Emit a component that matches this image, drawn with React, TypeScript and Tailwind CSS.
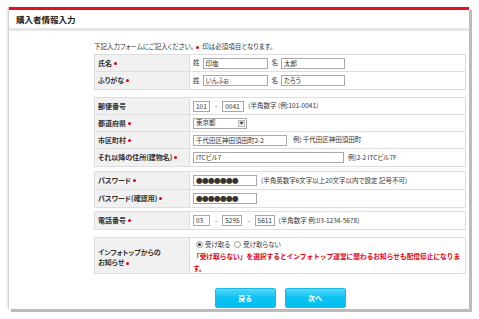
import React from 'react';

const Req = () => <span className="inline-block w-[3px] h-[3px] rounded-full bg-[#e60012] ml-[2px] align-middle" />;

function Input({ w, value, dots }: { w: string; value?: string; dots?: boolean }) {
  return (
    <div
      className={`${w} h-[11px] border border-[#a8a8a8] bg-white flex items-center pl-[2px] text-[6.5px] leading-none text-[#333] ${
        dots ? 'font-bold tracking-[-0.5px]' : ''
      }`}
    >
      {value}
    </div>
  );
}

function Row({ label, children, last, h = 'h-[17px]' }: { label: React.ReactNode; children?: React.ReactNode; last?: boolean; h?: string }) {
  return (
    <div className={`flex ${h} ${last ? '' : 'border-b border-[#dedede]'}`}>
      <div className="w-[95px] shrink-0 bg-[#f1f1f1] border-r border-[#dedede] flex items-center pl-[3px] font-bold text-[7px] text-[#333]">
        {label}
      </div>
      <div className="flex-1 flex items-center pl-[3px] gap-[3px] text-[6.5px] text-[#333]">{children}</div>
    </div>
  );
}

function Box({ children, className = '' }: { children: React.ReactNode; className?: string }) {
  return <div className={`border border-[#dedede] ${className}`}>{children}</div>;
}

function Radio({ checked, label }: { checked?: boolean; label: string }) {
  return (
    <span className="flex items-center gap-[2px]">
      <span className="w-[7px] h-[7px] rounded-full border border-[#999] bg-white flex items-center justify-center">
        {checked && <span className="w-[3px] h-[3px] rounded-full bg-[#333]" />}
      </span>
      {label}
    </span>
  );
}

export default function App() {
  return (
    <div className="w-[479px] h-[319px] bg-white overflow-hidden pt-[7px] pl-[8px] font-['Noto_Sans_CJK_JP','Noto_Sans',sans-serif] [font-feature-settings:'palt']">
      <div className="w-[461px] h-[302px] bg-white border-l border-[#d2d2d2] shadow-[3px_3px_0_#bcbcbc,-1px_0_2px_#e6e6e6]">
        {/* header */}
        <div className="h-[3px] bg-[#e8101e]" />
        <div className="h-[18px] flex items-center pl-[7px] text-[8.5px] font-bold text-[#222]">購入者情報入力</div>
        <div className="h-[3px] bg-[#e6e6e6]" />

        <div className="ml-[85px] w-[372px] pt-[11px]">
          <p className="text-[6.5px] text-[#333] leading-[8px] mb-[4px]">
            下記入力フォームにご記入ください。
            <span className="inline-block w-[3px] h-[3px] rounded-full bg-[#e60012] mx-[2px] align-middle" /> 印は必須項目となります。
          </p>

          <Box className="mb-[7px]">
            <Row label={<>氏名<Req /></>}>
              <span>姓</span>
              <Input w="w-[65px]" value="印塩" />
              <span className="ml-[1px]">名</span>
              <Input w="w-[64px]" value="太郎" />
            </Row>
            <Row label={<>ふりがな<Req /></>} last>
              <span>姓</span>
              <Input w="w-[65px]" value="いんふぉ" />
              <span className="ml-[1px]">名</span>
              <Input w="w-[64px]" value="たろう" />
            </Row>
          </Box>

          <Box className="mb-[4px]">
            <Row label="郵便番号">
              <Input w="w-[17px]" value="101" />
              <span className="mx-[2px]">-</span>
              <Input w="w-[22px]" value="0041" />
              <span>（半角数字 (例:101-0041)</span>
            </Row>
            <Row label={<>都道府県<Req /></>}>
              <div className="w-[54px] h-[11px] border border-[#a8a8a8] bg-white flex items-center justify-between pl-[2px] pr-[1px]">
                <span>東京都</span>
                <span className="w-[7px] h-[7px] border border-[#bbb] bg-[#f4f4f4] flex items-center justify-center text-[4px] leading-none">▼</span>
              </div>
            </Row>
            <Row label={<>市区町村<Req /></>}>
              <Input w="w-[94px]" value="千代田区神田須田町2-2" />
              <span className="ml-[3px]">例）千代田区神田須田町</span>
            </Row>
            <Row label={<>それ以降の住所(建物名)<Req /></>} last>
              <Input w="w-[151px]" value="ITCビル7" />
              <span className="ml-[1px]">例)2-2 ITCビル7F</span>
            </Row>
          </Box>

          <Box className="mb-[3px]">
            <Row label={<>パスワード<Req /></>} h="h-[18px]">
              <Input w="w-[64px]" value="●●●●●●●" dots />
              <span>（半角英数字6文字以上20文字以内で設定 記号不可）</span>
            </Row>
            <Row label={<>パスワード(確認用)<Req /></>} h="h-[17px]" last>
              <Input w="w-[64px]" value="●●●●●●●" dots />
            </Row>
          </Box>

          <Box className="mb-[7px]">
            <Row label={<>電話番号<Req /></>} h="h-[17px]" last>
              <Input w="w-[17px]" value="03" />
              <span className="mx-[2px]">-</span>
              <Input w="w-[20px]" value="5295" />
              <span className="mx-[2px]">-</span>
              <Input w="w-[20px]" value="5611" />
              <span>（半角数字 例:03-1234-5678）</span>
            </Row>
          </Box>

          <Box>
            <div className="flex h-[35px]">
              <div className="w-[95px] shrink-0 bg-[#f1f1f1] border-r border-[#dedede] flex flex-col justify-center pl-[3px] pt-[3px] font-bold text-[7px] text-[#333] leading-[10px]">
                <span>インフォトップからの</span>
                <span>お知らせ<Req /></span>
              </div>
              <div className="flex-1 pl-[6px] pt-[2px] text-[6.5px] text-[#333]">
                <div className="flex items-center gap-[4px] h-[9px]">
                  <Radio checked label="受け取る" />
                  <Radio label="受け取らない" />
                </div>
                <p className="w-[272px] -ml-[3px] mt-[1px] text-[6.7px] leading-[12px] font-bold text-[#e60012] [font-feature-settings:normal]">
                  「受け取らない」を選択するとインフォトップ運営に関わるお知らせも配信停止になります。
                </p>
              </div>
            </div>
          </Box>

          <div className="flex justify-center gap-[9px] mt-[14px]">
            <button className="w-[61px] h-[20px] rounded-[2px] bg-[linear-gradient(#5ad6f8,#0cc3f3_45%,#05bdf0)] border border-[#19b8e6] text-white text-[7px] font-bold">
              戻る
            </button>
            <button className="w-[61px] h-[20px] rounded-[2px] bg-[linear-gradient(#5ad6f8,#0cc3f3_45%,#05bdf0)] border border-[#19b8e6] text-white text-[7px] font-bold">
              次へ
            </button>
          </div>
        </div>
      </div>
    </div>
  );
}
